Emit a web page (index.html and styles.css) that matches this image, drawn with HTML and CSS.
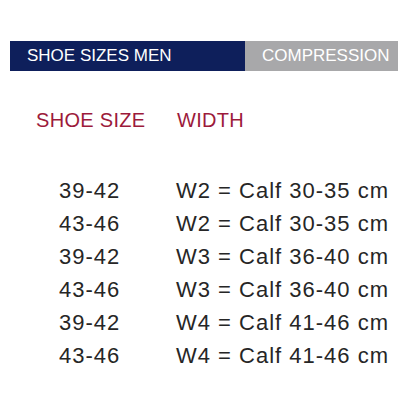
FILE: index.html
```html
<!DOCTYPE html>
<html>
<head>
<meta charset="utf-8">
<link rel="stylesheet" href="styles.css">
</head>
<body>
<div class="page">
  <div class="bar">
    <div class="bar-main">SHOE SIZES MEN</div>
    <div class="bar-side">COMPRESSION</div>
  </div>
  <div class="table">
    <div class="head">SHOE SIZE</div>
    <div class="head">WIDTH</div>
    <div class="size">39-42</div><div class="width">W2 = Calf 30-35 cm</div>
    <div class="size">43-46</div><div class="width">W2 = Calf 30-35 cm</div>
    <div class="size">39-42</div><div class="width">W3 = Calf 36-40 cm</div>
    <div class="size">43-46</div><div class="width">W3 = Calf 36-40 cm</div>
    <div class="size">39-42</div><div class="width">W4 = Calf 41-46 cm</div>
    <div class="size">43-46</div><div class="width">W4 = Calf 41-46 cm</div>
  </div>
</div>
</body>
</html>
```

FILE: styles.css
```css
html, body {
  margin: 0;
  padding: 0;
  background: #ffffff;
}
.page {
  width: 408px;
  height: 408px;
  padding-top: 41px;
  box-sizing: border-box;
  font-family: "Liberation Sans", Arial, sans-serif;
}
.bar {
  display: flex;
  margin: 0 10px;
  height: 30px;
  font-size: 17px;
  line-height: 30px;
  color: #ffffff;
}
.bar-main {
  width: 235px;
  background: #0e1f5b;
  padding-left: 17px;
  box-sizing: border-box;
}
.bar-side {
  flex: 1;
  background: #a8a8aa;
  padding-left: 17px;
}
.table {
  display: grid;
  grid-template-columns: 141px 1fr;
  margin: 33px 0 0 36px;
  color: #262626;
  font-size: 22px;
  line-height: 33px;
  letter-spacing: 1px;
}
.head {
  color: #9c1a3b;
  font-size: 20px;
  letter-spacing: 0.3px;
  margin-bottom: 37px;
}
.size {
  padding-left: 23px;
}
.width {
  margin-left: -1px;
}
```
